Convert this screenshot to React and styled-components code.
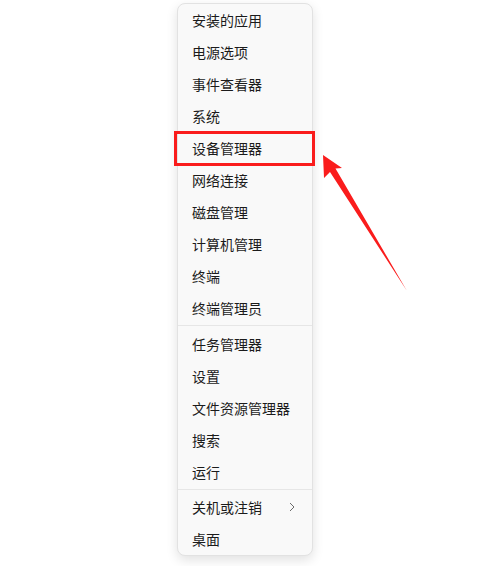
import React from 'react';
import styled, { createGlobalStyle } from 'styled-components';

const Global = createGlobalStyle`
  html, body {
    margin: 0;
    padding: 0;
    background: #ffffff;
  }
  body {
    font-family: "Noto Sans CJK SC", "Noto Sans", sans-serif;
  }
`;

const Page = styled.div`
  position: relative;
  width: 503px;
  height: 566px;
  padding: 3px 0 0 177px;
  box-sizing: border-box;
`;

const Menu = styled.ul`
  width: 136px;
  margin: 0;
  padding: 0;
  list-style: none;
  box-sizing: border-box;
  background: #f9f9f9;
  border: 1px solid #e2e2e2;
  border-radius: 8px;
  box-shadow: 0 4px 12px rgba(0, 0, 0, 0.12);
`;

const Item = styled.li`
  position: relative;
  height: 32px;
  display: flex;
  align-items: center;
  justify-content: space-between;
  padding: 0 17px 0 14px;
  font-size: 14px;
  color: #1b1b1b;
  white-space: nowrap;

  ${(p) => p.$marked && `
    &::after {
      content: '';
      position: absolute;
      top: -1px;
      bottom: -2px;
      left: -4px;
      right: -3px;
      border: 3px solid #fa1c1c;
    }
  `}
`;

const Separator = styled.li`
  height: 3.5px;
  display: flex;
  align-items: center;

  &::before {
    content: '';
    flex: 1;
    height: 1px;
    background: #e6e6e6;
  }
`;

const Arrow = styled.svg`
  position: absolute;
  left: 0;
  top: 0;
  pointer-events: none;
`;

const Chevron = () => (
  <svg width="6" height="10" viewBox="0 0 6 10">
    <path d="M1 1 L5 5 L1 9" fill="none" stroke="#6b6b6b" strokeWidth="1" />
  </svg>
);

const groups = [
  ['安装的应用', '电源选项', '事件查看器', '系统', '设备管理器', '网络连接', '磁盘管理', '计算机管理', '终端', '终端管理员'],
  ['任务管理器', '设置', '文件资源管理器', '搜索', '运行'],
  ['关机或注销', '桌面'],
];

const App = () => {
  return (
    <Page>
      <Global />
      <Menu>
        {groups.map((group, gi) => (
          <React.Fragment key={gi}>
            {gi > 0 && <Separator />}
            {group.map((label) => (
              <Item key={label} $marked={label === '设备管理器'}>
                <span>{label}</span>
                {label === '关机或注销' && <Chevron />}
              </Item>
            ))}
          </React.Fragment>
        ))}
      </Menu>
      <Arrow width="503" height="566" viewBox="0 0 503 566">
        <polygon
          points="323,155 342,168 335.5,168.5 407,291 330,172 324,178"
          fill="#fa1c1c"
        />
      </Arrow>
    </Page>
  );
};

export default App;
